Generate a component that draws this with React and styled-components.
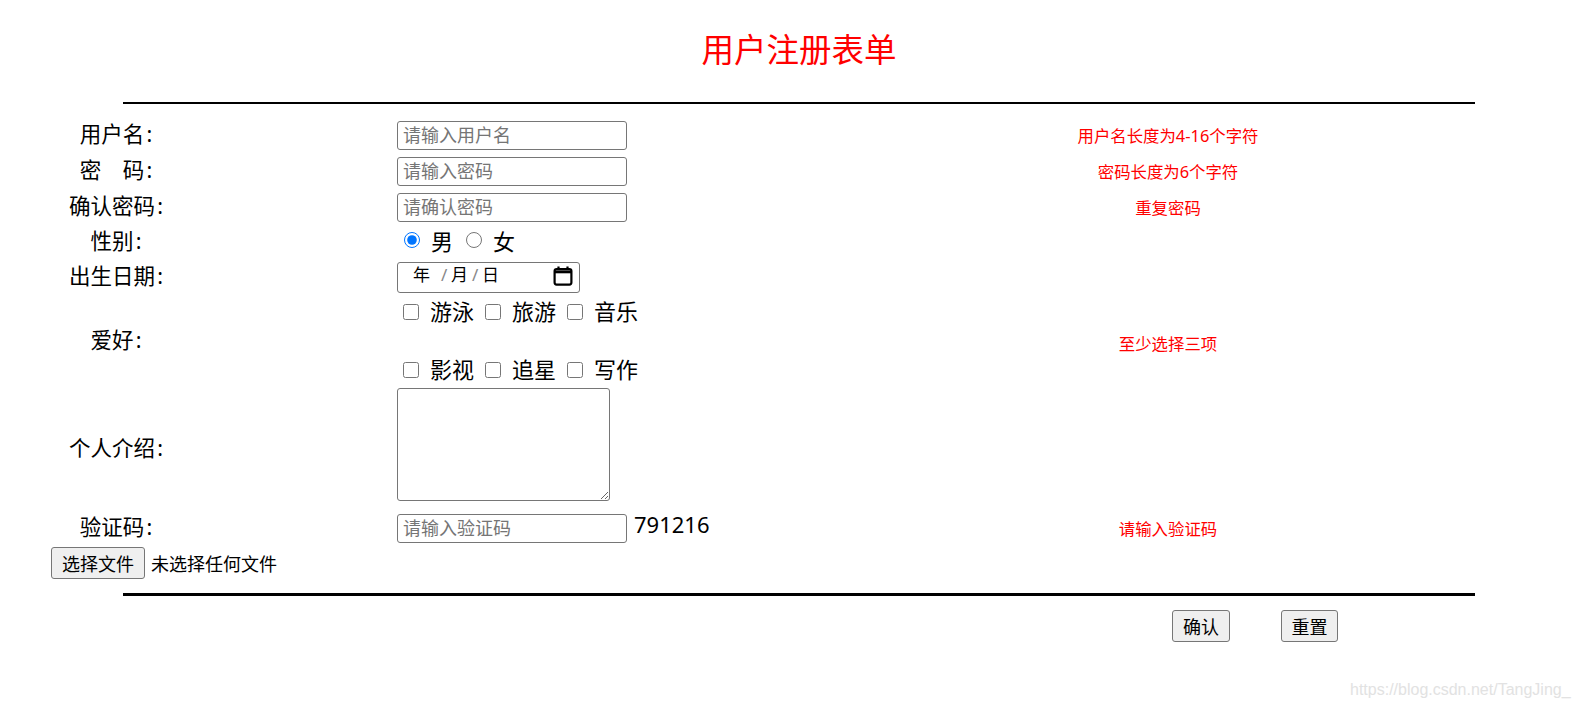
import styled, { createGlobalStyle } from 'styled-components';

const GlobalStyle = createGlobalStyle`
  html, body {
    margin: 0;
    background: #fff;
  }

  body {
    font-family: "Noto Sans", "Noto Sans CJK SC", sans-serif;
    color: #000;
  }
`;

const Page = styled.div`
  height: 709px;
  padding-left: 19px;
  box-sizing: border-box;
  overflow: hidden;
  position: relative;
`;

const Title = styled.h1`
  margin: 0;
  padding-top: 28px;
  text-align: center;
  font-size: 32.5px;
  font-weight: 400;
  line-height: 44px;
  height: 44px;
  color: #f00;
`;

const Rule = styled.hr`
  width: 1352px;
  height: ${(p) => p.$weight}px;
  margin: ${(p) => p.$top}px auto 0;
  border: 0;
  background: #000;
`;

const Form = styled.form`
  margin-left: 32px;
`;

const Row = styled.div`
  display: grid;
  grid-template-columns: 130px 216px 680px 182px;
  grid-template-rows: ${(p) => p.$height}px;
  align-items: center;
  margin-top: ${(p) => p.$top || 0}px;
`;

const Label = styled.label`
  text-align: center;
  font-size: 21.5px;
  line-height: 24px;
  white-space: pre;
  padding: ${(p) => (p.$low ? '6px 0 0' : '0 0 3px')};
`;

const Colon = styled.span`
  margin-left: 2px;
`;

const Field = styled.div`
  grid-column: 3;
  display: flex;
  align-items: center;
`;

const RadioField = styled(Field)`
  padding-bottom: 3px;
`;

const Hint = styled.span`
  grid-column: 4;
  text-align: center;
  font-size: 16.4px;
  line-height: 20px;
  color: #f00;
  white-space: nowrap;
  padding-top: ${(p) => (p.$low ? '6px' : '0')};
`;

const TextInput = styled.input`
  width: 230px;
  height: 29px;
  box-sizing: border-box;
  padding: 0 5px 3px;
  border: 1px solid #767676;
  border-radius: 3px;
  font: 18px "Noto Sans CJK SC", sans-serif;
  outline: none;

  &::placeholder {
    color: #757575;
  }
`;

const Radio = styled.input.attrs({ type: 'radio', name: 'sex' })`
  width: 16px;
  height: 16px;
  margin: 0 11px 1px ${(p) => p.$left}px;
`;

const Choice = styled.span`
  font-size: 22px;
  line-height: 24px;
`;

const DateBox = styled.div`
  width: 183px;
  height: 31px;
  box-sizing: border-box;
  display: flex;
  align-items: center;
  padding: 0 6px 0 15px;
  border: 1px solid #767676;
  border-radius: 3px;
  font-size: 17px;
`;

const DatePart = styled.span`
  width: ${(p) => p.$width}px;
  line-height: 22px;
  padding-bottom: 5px;
  color: ${(p) => (p.$slash ? '#888' : '#000')};
`;

const CalendarIcon = styled.svg`
  width: 20px;
  height: 20px;
  margin: 0 0 4px auto;
`;

const HobbyList = styled.div`
  grid-column: 3;
  display: flex;
  flex-direction: column;
  justify-content: space-between;
  height: 100%;
`;

const HobbyLine = styled.div`
  display: flex;
  align-items: center;
  height: 24px;
  padding-left: 6px;
`;

const Check = styled.input.attrs({ type: 'checkbox' })`
  width: 16px;
  height: 16px;
  margin: 0 11px 0 0;
`;

const HobbyName = styled(Choice)`
  width: 55px;
  padding-bottom: 2px;
`;

const LastHobbyName = styled(Choice)`
  padding-bottom: 2px;
`;

const Intro = styled.textarea`
  display: block;
  width: 213px;
  height: 113px;
  box-sizing: border-box;
  padding: 2px;
  border: 1px solid #767676;
  border-radius: 3px;
  outline: none;
`;

const Code = styled.span`
  margin-left: 7px;
  line-height: 24px;
  padding-bottom: 10px;
  font-size: 22px;
`;

const FileRow = styled.div`
  display: flex;
  align-items: center;
  height: 32px;
  margin-top: 4px;
`;

const PlainButton = styled.button`
  height: 32px;
  box-sizing: border-box;
  padding: 0;
  width: ${(p) => p.$width}px;
  margin-left: ${(p) => p.$left || 0}px;
  background: #efefef;
  border: 1px solid #767676;
  border-radius: 3px;
  font: 18px "Noto Sans CJK SC", sans-serif;
  color: #000;
`;

const FileName = styled.span`
  margin-left: 6px;
  font-size: 18px;
`;

const Actions = styled.div`
  display: flex;
  margin: 14px 0 0 1153px;
`;

const Watermark = styled.span`
  position: absolute;
  left: 1350px;
  top: 681px;
  font: 16px "Liberation Sans", Arial, sans-serif;
  color: #e2e2e2;
`;

const App = () => {
  return (
    <Page>
      <GlobalStyle />
      <Title>用户注册表单</Title>
      <Rule $weight={2} $top={30} />
      <Form>
        <Row $height={29} $top={17}>
          <Label>用户名<Colon>:</Colon></Label>
          <Field>
            <TextInput placeholder="请输入用户名" />
          </Field>
          <Hint>用户名长度为4-16个字符</Hint>
        </Row>
        <Row $height={29} $top={7}>
          <Label>密　码<Colon>:</Colon></Label>
          <Field>
            <TextInput placeholder="请输入密码" />
          </Field>
          <Hint>密码长度为6个字符</Hint>
        </Row>
        <Row $height={29} $top={7}>
          <Label>确认密码<Colon>:</Colon></Label>
          <Field>
            <TextInput placeholder="请确认密码" />
          </Field>
          <Hint>重复密码</Hint>
        </Row>
        <Row $height={40}>
          <Label>性别<Colon>:</Colon></Label>
          <RadioField>
            <Radio $left={7} defaultChecked />
            <Choice>男</Choice>
            <Radio $left={13} />
            <Choice>女</Choice>
          </RadioField>
        </Row>
        <Row $height={31}>
          <Label>出生日期<Colon>:</Colon></Label>
          <Field>
            <DateBox>
              <DatePart $width={28}>年</DatePart>
              <DatePart $width={10} $slash>/</DatePart>
              <DatePart $width={21}>月</DatePart>
              <DatePart $width={10} $slash>/</DatePart>
              <DatePart $width={17}>日</DatePart>
              <CalendarIcon viewBox="0 0 20 20">
                <path d="M5.5 0.5v3M14.5 0.5v3" stroke="#000" strokeWidth="2.2" />
                <rect x="1.6" y="3" width="16.8" height="15.6" rx="2" fill="none" stroke="#000" strokeWidth="2.2" />
                <path d="M1.6 5.8h16.8" stroke="#000" strokeWidth="3" />
              </CalendarIcon>
            </DateBox>
          </Field>
        </Row>
        <Row $height={82} $top={7}>
          <Label>爱好<Colon>:</Colon></Label>
          <HobbyList>
            <HobbyLine>
              <Check />
              <HobbyName>游泳</HobbyName>
              <Check />
              <HobbyName>旅游</HobbyName>
              <Check />
              <LastHobbyName>音乐</LastHobbyName>
            </HobbyLine>
            <HobbyLine>
              <Check />
              <HobbyName>影视</HobbyName>
              <Check />
              <HobbyName>追星</HobbyName>
              <Check />
              <LastHobbyName>写作</LastHobbyName>
            </HobbyLine>
          </HobbyList>
          <Hint $low>至少选择三项</Hint>
        </Row>
        <Row $height={113} $top={6}>
          <Label $low>个人介绍<Colon>:</Colon></Label>
          <Field>
            <Intro />
          </Field>
        </Row>
        <Row $height={29} $top={13}>
          <Label>验证码<Colon>:</Colon></Label>
          <Field>
            <TextInput placeholder="请输入验证码" />
            <Code>791216</Code>
          </Field>
          <Hint>请输入验证码</Hint>
        </Row>
        <FileRow>
          <PlainButton type="button" $width={94}>选择文件</PlainButton>
          <FileName>未选择任何文件</FileName>
        </FileRow>
      </Form>
      <Rule $weight={3} $top={14} />
      <Actions>
        <PlainButton type="button" $width={58}>确认</PlainButton>
        <PlainButton type="button" $width={57} $left={51}>重置</PlainButton>
      </Actions>
      <Watermark>https://blog.csdn.net/TangJing_</Watermark>
    </Page>
  );
};

export default App;
